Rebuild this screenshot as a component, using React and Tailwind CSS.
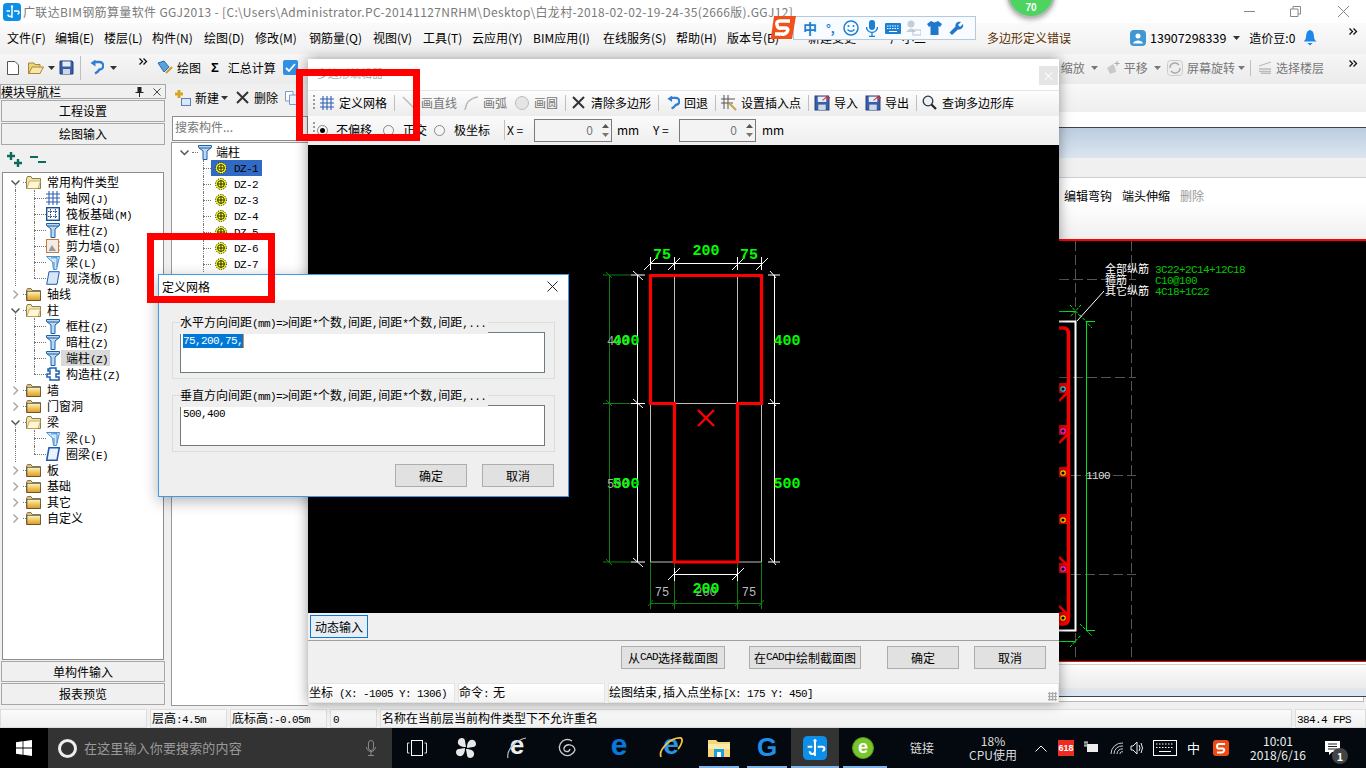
import React from 'react';

const Mixed = ({ t }) => t.split(/([\x00-\x7f]+)/).map((s, i) =>
  /^[\x00-\x7f]+$/.test(s)
    ? <span key={i} className="text-[11px] tracking-[-0.6px] [font-family:'Liberation_Mono',monospace]">{s}</span>
    : <span key={i}>{s}</span>);

const Logo = ({ s = 18 }) => (
  <svg width={s} height={s} viewBox="0 0 18 18" className="shrink-0">
    <rect width="18" height="18" rx="3.5" fill="#0d8ee8" />
    <path d="M9 3v8.500a2 2 0 0 1-4 0M3.500 8h3.500M11 8h3.500a1.500 1.500 0 0 1 0 3M9 13v2" stroke="#fff" strokeWidth="1.500" fill="none" />
    <circle cx="9" cy="3.500" r="1.200" fill="#fff" />
  </svg>
);
const Folder = ({ open }) => (
  <svg width="15" height="13" viewBox="0 0 15 13" className="shrink-0">
    <defs><linearGradient id="fg" x1="0" y1="0" x2="0" y2="1"><stop offset="0" stopColor="#fff3b8" /><stop offset="1" stopColor="#dd9a1c" /></linearGradient></defs>
    <path d="M.5 2.500V12.500H14.500V2.500H6L5 .5H1.500Z" fill={open ? '#f6e3a6' : '#d9c27a'} stroke="#6b6134" strokeWidth=".8" />
    {open
      ? <path d="M.8 12.500L3.500 5H14.600L12 12.500Z" fill="#fff6d2" stroke="#b5954a" strokeWidth=".7" />
      : <rect x="1" y="3.500" width="13.500" height="9" fill="url(#fg)" stroke="#222" strokeWidth=".5" />}
  </svg>
);
const Column = () => (
  <svg width="14" height="15" viewBox="0 0 14 15" className="shrink-0">
    <path d="M.5 .5H13.500V2.500L9 6V14.500H5V6L.5 2.500Z" fill="#bcd9f3" stroke="#1b5fa8" />
    <path d="M1 3H13" stroke="#1b5fa8" />
  </svg>
);
const GridI = ({ c = '#2f5fb3' }) => (
  <svg width="14" height="14" viewBox="0 0 14 14" className="shrink-0">
    <path d="M3 0V14M7 0V14M11 0V14M0 3H14M0 7H14M0 11H14" stroke={c} strokeWidth="1.100" />
  </svg>
);
const Raft = () => (
  <svg width="14" height="14" viewBox="0 0 14 14" className="shrink-0">
    <rect x=".7" y=".7" width="12.600" height="12.600" fill="#fff" stroke="#1d4f8f" strokeWidth="1.400" />
    <path d="M4.500 2V12M9.500 2V12M2 4.500H12M2 9.500H12" stroke="#1d4f8f" strokeDasharray="1.500 1" />
  </svg>
);
const Wall = () => (
  <svg width="14" height="14" viewBox="0 0 14 14" className="shrink-0">
    <rect x=".5" y=".5" width="12" height="13" fill="#f3ece4" stroke="#c97b3f" />
    <path d="M3 11L6 6L10 12H3Z" fill="#999" /><path d="M12 3H14M12 7H14M12 11H14" stroke="#c97b3f" />
  </svg>
);
const Beam = () => (
  <svg width="14" height="15" viewBox="0 0 14 15" className="shrink-0">
    <path d="M.5 1.500H13.500L10.500 14.500H7.500L6.500 7Z" fill="#cfe6f8" stroke="#4a90d0" />
    <path d="M5 3L11 2.500M8 7V14M11 3V12" stroke="#4a90d0" />
  </svg>
);
const Slab = ({ dark }) => (
  <svg width="14" height="14" viewBox="0 0 14 14" className="shrink-0">
    <path d="M3 .7H13.300L11 13.300H.7Z" fill={dark ? '#eaf3fb' : '#d5e7f7'} stroke="#2459b0" strokeWidth={dark ? 1.600 : 1} />
  </svg>
);
const Constr = () => (
  <svg width="14" height="14" viewBox="0 0 14 14" className="shrink-0">
    <path d="M4 1H10V4H13V7H10V10H13V13H4V10H1V7H4V4H2V2H4Z" fill="#fff" stroke="#1f5fb0" strokeWidth="1.500" />
  </svg>
);
const Gear = () => (
  <svg width="12" height="12" viewBox="0 0 12 12" className="shrink-0">
    <circle cx="6" cy="6" r="5.500" fill="#ffff20" />
    <circle cx="6" cy="6" r="5.400" fill="none" stroke="#111" strokeWidth="1" strokeDasharray="1.200 1.200" />
    <circle cx="6" cy="6" r="3.400" fill="#ffff20" stroke="#111" strokeWidth=".9" />
    <path d="M2.800 6H9.200M6 2.800V9.200" stroke="#111" strokeWidth=".9" />
  </svg>
);
const Chev = ({ open }) => (
  <svg width="9" height="9" viewBox="0 0 9 9" className="shrink-0">
    <path d={open ? 'M.5 2.500L4.500 6.500L8.500 2.500' : 'M2.500 .5L6.500 4.500L2.500 8.500'} fill="none" stroke={open ? '#555' : '#aaa'} strokeWidth="1.500" />
  </svg>
);
const Undo = ({ s = 15 }) => (
  <svg width={s} height={s} viewBox="0 0 15 15" className="shrink-0">
    <path d="M6 2H10.500A3.500 3.500 0 0 1 10.500 9.500C9.500 11 8 12.500 6 13.500" fill="none" stroke="#2f7fd6" strokeWidth="2.400" />
    <path d="M6.500 -.5V6.500L1.500 3Z" fill="#2f7fd6" />
  </svg>
);
const Arrow = ({ c = '#333' }) => (
  <svg width="7" height="4" viewBox="0 0 7 4" className="shrink-0"><path d="M0 0H7L3.500 4Z" fill={c} /></svg>
);
const Chevrons = () => (
  <svg width="9" height="7" viewBox="0 0 9 7" className="shrink-0 block"><path d="M.5 .5L3.500 3.500L.5 6.500M4.500 .5L7.500 3.500L4.500 6.500" fill="none" stroke="#111" strokeWidth="1.300" /></svg>
);
const BigX = () => (
  <svg width="13" height="13" viewBox="0 0 13 13" className="shrink-0"><path d="M1 1L12 12M12 1L1 12" stroke="#333" strokeWidth="2" /></svg>
);
const Save = ({ s = 15, arrow }) => (
  <svg width={s} height={s} viewBox="0 0 15 15" className="shrink-0">
    <path d="M1 1H13L14 2V14H1Z" fill="#3a5ea8" stroke="#223f7c" />
    <rect x="3.500" y="1.500" width="8" height="5" fill="#e8eef8" />
    <rect x="4" y="9" width="7" height="5" fill="#cfd6e4" />
    {arrow && <path d="M8 5L13 1V4L15 2" stroke="#c33" fill="none" />}
  </svg>
);
const Sep = ({ cn }) => <div className={`w-px h-4 bg-[#bfbfbf] shrink-0 ${cn}`} />;
const Grip = ({ cn }) => (
  <div className={`w-[2px] h-4 shrink-0 bg-[repeating-linear-gradient(to_bottom,#9a9a9a_0,#9a9a9a_2px,transparent_2px,transparent_4px)] ${cn}`} />
);

const tree = [
  ['open', '常用构件类型'], ['c', '轴网(J)', <GridI />], ['c', '筏板基础(M)', <Raft />], ['c', '框柱(Z)', <Column />], ['c', '剪力墙(Q)', <Wall />], ['c', '梁(L)', <Beam />], ['l', '现浇板(B)', <Slab />],
  ['closed', '轴线'],
  ['open', '柱'], ['c', '框柱(Z)', <Column />], ['c', '暗柱(Z)', <Column />], ['h', '端柱(Z)', <Column />], ['l', '构造柱(Z)', <Constr />],
  ['closed', '墙'], ['closed', '门窗洞'],
  ['open', '梁'], ['c', '梁(L)', <Beam />], ['l', '圈梁(E)', <Slab dark />],
  ['closed', '板'], ['closed', '基础'], ['closed', '其它'], ['closed', '自定义'],
];

const TreeRow = ({ row }) => {
  const [k, t, icon] = row;
  if (k === 'open' || k === 'closed') {
    return (
      <div className="relative flex items-center h-4 shrink-0">
        {k === 'open' && <div className="absolute left-[12px] top-[10px] h-[8px] border-l border-dotted border-[#777]" />}
        <div className="ml-[8px]"><Chev open={k === 'open'} /></div>
        <div className="w-[3px] ml-[3px] border-b border-dotted border-[#777]" />
        <Folder open={k === 'open'} />
        <div className="ml-[6px]"><Mixed t={t} /></div>
      </div>
    );
  }
  return (
    <div className="relative flex items-center h-4 shrink-0">
      <div className="absolute left-[12px] top-0 h-4 border-l border-dotted border-[#777]" />
      <div className={`absolute left-[31px] top-0 border-l border-dotted border-[#777] ${k === 'l' ? 'h-2' : 'h-4'}`} />
      <div className="ml-[31px] w-[12px] border-b border-dotted border-[#777]" />
      <div className="w-[14px] flex justify-center">{icon}</div>
      <div className={`ml-[1px] pl-[5px] pr-[2px] h-4 leading-4 ${k === 'h' ? 'bg-[#d9d9d9]' : ''}`}><Mixed t={t} /></div>
    </div>
  );
};

const NavBtn = ({ t, h = 'h-[22px]' }) => (
  <div className={`${h} mx-px mb-px shrink-0 flex items-center justify-center border border-[#a8a8a8] bg-[#f0f0f0] text-[12px]`}>{t}</div>
);

const Dz = ({ n, sel }) => (
  <div className="relative flex items-center h-4 shrink-0">
    <div className="absolute left-[31px] top-0 h-4 border-l border-dotted border-[#777]" />
    <div className="ml-[31px] w-[8px] border-b border-dotted border-[#777]" />
    <div className={`flex items-center w-[51px] h-4 pl-[4px] leading-4 ${sel ? 'bg-[#316ac5]' : ''}`}>
      <Gear />
      <div className="ml-[7px]"><Mixed t={`DZ-${n}`} /></div>
    </div>
  </div>
);

const menu = [
  ['w-[48px]', '文件(F)'], ['w-[49px]', '编辑(E)'], ['w-[48px]', '楼层(L)'], ['w-[52px]', '构件(N)'], ['w-[51px]', '绘图(D)'], ['w-[54px]', '修改(M)'], ['w-[64px]', '钢筋量(Q)'], ['w-[50px]', '视图(V)'], ['w-[49px]', '工具(T)'], ['w-[61px]', '云应用(Y)'], ['w-[70px]', 'BIM应用(I)'], ['w-[73px]', '在线服务(S)'], ['w-[51px]', '帮助(H)'], ['w-[81px]', '版本号(B)'], ['w-[82px]', '新建变更'], ['w-[97px]', '广小二'],
];

const Spin = ({ w }) => (
  <div className={`${w} h-[23px] border border-[#7a7a7a] bg-[#f3f3f3] flex items-center justify-end shrink-0`}>
    <span className="text-[#777] text-[12px] mr-[7px]">0</span>
    <div className="w-[10px] mr-[1px] flex flex-col gap-[5px] items-center">
      <svg width="7" height="4" viewBox="0 0 7 4"><path d="M0 4H7L3.500 0Z" fill="#555" /></svg>
      <svg width="7" height="4" viewBox="0 0 7 4"><path d="M0 0H7L3.500 4Z" fill="#777" /></svg>
    </div>
  </div>
);

const Radio = ({ on, cn }) => (
  <div className={`w-[11px] h-[11px] rounded-full border border-[#888] bg-[#f6f6f6] flex items-center justify-center shrink-0 ${cn}`}>
    {on && <div className="w-[5px] h-[5px] rounded-full bg-black" />}
  </div>
);

const WinBtn = ({ t, w, cn }) => (
  <div className={`${w} h-[23px] border border-[#adadad] bg-[#e1e1e1] flex items-center justify-center text-[12px] shrink-0 ${cn}`}><Mixed t={t} /></div>
);

const Tick = ({ x, y }) => <path d={`M${x - 6} ${y + 6}L${x + 6} ${y - 6}`} stroke="#fff" />;
const G = ({ x, y, children, c = '#00ff00', s = 15, a = 'middle', b = 700 }) => (
  <text x={x} y={y} fill={c} fontSize={s} fontWeight={b} textAnchor={a} fontFamily="'Liberation Mono',monospace">{children}</text>
);

const Polygon = () => (
  <svg width="751" height="468" viewBox="308 145 751 468" className="block shrink-0">
    <rect x="308" y="145" width="751" height="468" fill="#000" />
    <g stroke="#bdbdbd" fill="none">
      <path d="M650.500 275V562M674.500 275V562M737.500 275V562M761.500 275V562M650 275H762M650 403.500H762M650 562H762" />
    </g>
    <g stroke="#0f7d0f" fill="none">
      <path d="M609.500 275V562M603 275H631M603 403.500H631M603 562H631M650.500 562V609M674.500 562V609M737.500 562V609M761.500 562V609M650 603.500H762" />
      <path d="M606 272L612 278M606 400L612 406M606 559L612 565M648 606L653 600M672 606L677 600M735 606L740 600M759 606L764 600" />
    </g>
    <g stroke="#fff" fill="none">
      <path d="M637.500 275V562M631 275H645M631 403.500H645M631 562H645M774.500 275V562M768 275H780M768 403.500H780M768 562H780M650.500 263.500H761.500M650.500 257V270M674.500 257V270M737.500 257V270M761.500 257V270M674.500 574.500H737.500M674.500 568V581M737.500 568V581" />
      <path d="M633 271L643 280M633 399L643 408M633 558L643 567M770 271L776 278M770 399L776 406M770 558L776 565" />
    </g>
    <Tick x={650} y={264} /><Tick x={674} y={264} /><Tick x={738} y={264} /><Tick x={762} y={264} /><Tick x={674} y={574} /><Tick x={738} y={574} />
    <text x="607" y="345" fill="#aaa" fontSize="12" fontFamily="'Liberation Mono',monospace">400</text>
    <text x="607" y="488" fill="#aaa" fontSize="12" fontFamily="'Liberation Mono',monospace">500</text>
    <text x="706" y="596" fill="#aaa" fontSize="12" textAnchor="middle" fontFamily="'Liberation Mono',monospace">200</text>
    <text x="662" y="596" fill="#bbb" fontSize="12" textAnchor="middle" fontFamily="'Liberation Mono',monospace">75</text>
    <text x="749" y="596" fill="#bbb" fontSize="12" textAnchor="middle" fontFamily="'Liberation Mono',monospace">75</text>
    <path d="M650.500 275.500H761.500V403.500H737.500V562H674.500V403.500H650.500Z" fill="none" stroke="#ff0000" strokeWidth="3.200" />
    <path d="M698 410L714 426M714 410L698 426" stroke="#ff0000" strokeWidth="2.400" />
    <G x={662} y={259}>75</G><G x={706} y={255}>200</G><G x={749} y={259}>75</G>
    <G x={626} y={345}>400</G><G x={626} y={488}>500</G><G x={787} y={345}>400</G><G x={787} y={488}>500</G><G x={706} y={593}>200</G>
  </svg>
);

const rebars = [[389, '#22e0ff', 1], [431, '#ff30ff', 1], [473, '#ffe600', 0], [520, '#ffe600', 0], [569, '#ff30ff', 2], [618, '#ffe600', 2]];

const RightCad = () => (
  <svg width="307" height="420" viewBox="1059 241 307 420" className="block shrink-0">
    <rect x="1059" y="241" width="307" height="420" fill="#000" />
    <g stroke="#555" strokeDasharray="10 4" fill="none">
      <path d="M1075.500 241V660M1131.500 241V660M1059 279.500H1136M1059 377.500H1136M1071 475.500H1136M1071 574.500H1136" />
    </g>
    <path d="M1059 328H1063Q1068.500 328 1068.500 334V618Q1068.500 624 1063 624H1059" fill="none" stroke="#ff0000" strokeWidth="3.500" />
    <path d="M1059 321.500H1075.500V630.500H1059" fill="none" stroke="#fff" strokeWidth="2" />
    <path d="M1086.500 321V630M1059 311.500H1075M1086 321.500H1095M1059 641.500H1075M1086 630.500H1095" stroke="#00e020" fill="none" />
    <path d="M1070 305L1081 317M1081 305L1070 317M1080 315L1092 328M1080 624L1092 636M1070 647L1081 635" stroke="#00e020" strokeDasharray="3 1" />
    <path d="M1104 291L1077 321" stroke="#fff" />
    {rebars.map(([y, c, h]) => (
      <g key={y}>
        <rect x="1059" y={y - 6} width="8" height="10" fill="#e00000" />
        {h === 1 && <path d={`M1059 ${y + 12}L1067 ${y + 4}`} stroke="#f00" strokeWidth="2.500" />}
        {h === 2 && <path d={`M1059 ${y - 12}L1067 ${y - 4}`} stroke="#f00" strokeWidth="2.500" />}
        <circle cx="1063" cy={y} r="2.200" fill="#000" stroke={c} strokeWidth="1.200" />
      </g>
    ))}
    <g fill="#fff" fontSize="11" fontFamily="'Noto Sans CJK SC',sans-serif">
      <text x="1105" y="273">全部纵筋</text>
      <text x="1105" y="284">箍筋</text>
      <text x="1105" y="295">其它纵筋</text>
    </g>
    <g fill="#00c800" fontSize="11" letterSpacing="-0.6" fontFamily="'Liberation Mono',monospace">
      <text x="1155" y="273">3C22+2C14+12C18</text>
      <text x="1155" y="284">C10@100</text>
      <text x="1155" y="295">4C18+1C22</text>
    </g>
    <text x="1086" y="479" fill="#ddd" fontSize="11" letterSpacing="-0.6" fontFamily="'Liberation Mono',monospace">1100</text>
  </svg>
);

const TaskIcon = ({ w = 'w-[48px]', cn = '', children }) => (
  <div className={`${w} h-full flex items-center justify-center shrink-0 ${cn}`}>{children}</div>
);

export default function App() {
  return (
    <div className="relative w-[1366px] h-[768px] overflow-hidden bg-[#f0f0f0] flex flex-col text-black text-[12px] [font-family:'Noto_Sans_CJK_SC',sans-serif]">
      {/* title */}
      <div className="h-[23px] shrink-0 bg-white flex items-center relative">
        <div className="ml-[3px]"><Logo /></div>
        <div className="ml-[2px] text-[#7a7a7a] text-[12px] tracking-[0.35px] whitespace-nowrap">广联达BIM钢筋算量软件 GGJ2013 - [C:\Users\Administrator.PC-20141127NRHM\Desktop\白龙村-2018-02-02-19-24-35(2666版).GGJ12]</div>
        <div className="ml-auto flex items-center">
          <div className="w-[11px] h-px bg-[#888] mr-[35px]" />
          <svg width="11" height="11" viewBox="0 0 11 11" className="mr-[36px]"><path d="M.5 3H8V10.500H.5ZM3 3V.5H10.500V8H8" fill="none" stroke="#888" /></svg>
          <svg width="13" height="13" viewBox="0 0 13 13" className="mr-[16px]"><path d="M1 1L12 12M12 1L1 12" stroke="#888" /></svg>
        </div>
      </div>
      {/* menu */}
      <div className="h-[31px] shrink-0 flex items-center bg-[linear-gradient(#fafafa,#f0f0f0)] pl-[7px] pb-px">
        {menu.map(([w, t]) => <div key={t} className={`${w} shrink-0 whitespace-nowrap`}>{t}</div>)}
        <div className="w-[92px] text-[#5a3000] text-[12px] shrink-0 whitespace-nowrap">多边形定义错误</div>
        <div className="ml-[51px] flex items-center shrink-0">
          <div className="w-4 h-4 rounded-sm bg-[#3f97d4] flex items-center justify-center">
            <svg width="12" height="12" viewBox="0 0 12 12"><circle cx="6" cy="4" r="2.500" fill="#fff" /><path d="M1 11.500C2 7.500 10 7.500 11 11.500Z" fill="#fff" /></svg>
          </div>
          <span className="ml-[4px] text-[12.5px]">13907298339</span>
          <span className="ml-[7px]"><Arrow /></span>
          <span className="ml-[9px]">造价豆:0</span>
          <svg width="14" height="16" viewBox="0 0 14 16" className="ml-[8px]"><path d="M7 0C3.500 1 3.500 3 3 7C3 9 1.500 10.500 .5 11.500H13.500C12.500 10.500 11 9 11 7C10.500 3 10.500 1 7 0ZM4.500 13H9.500L7 15.500Z" fill="#1e86e8" /></svg>
        </div>
        <div className="ml-auto mr-[8px] self-start mt-[5px]"><Chevrons /></div>
      </div>
      {/* toolbar */}
      <div className="h-[30px] shrink-0 flex items-center bg-[linear-gradient(#f6f6f6,#ebebeb)] pb-[3px]">
        <svg width="12" height="14" viewBox="0 0 12 14" className="ml-[7px] shrink-0"><path d="M.5 .5H8L11.500 4V13.500H.5Z" fill="#fff" stroke="#555" /></svg>
        <svg width="16" height="13" viewBox="0 0 16 13" className="ml-[9px] shrink-0"><path d="M.5 2H6L7 3.500H12V12.500H.5Z" fill="#f0d27d" stroke="#a98936" /><path d="M.8 12.500L4 6H15.500L12 12.500Z" fill="#f7e6a9" stroke="#a98936" /></svg>
        <span className="ml-[4px]"><Arrow /></span>
        <span className="ml-[4px]"><Save /></span>
        <Sep cn="ml-[6px] !h-[24px]" />
        <span className="ml-[8px]"><Undo /></span>
        <span className="ml-[6px]"><Arrow /></span>
        <div className="ml-[22px] w-[9px] self-start mt-[4px]"><Chevrons /></div>
        <div className="ml-[9px] flex items-center shrink-0">
          <svg width="16" height="16" viewBox="0 0 16 16" className="shrink-0"><path d="M1 3L7 1L12 7L7 12Z" fill="#5aa0dc" stroke="#2a6aa8" /><path d="M9 13L15 7" stroke="#c99a2e" strokeWidth="2" /></svg>
          <span className="ml-[4px]">绘图</span>
          <span className="ml-[10px] font-bold text-[13px] [font-family:'Liberation_Sans',sans-serif]">Σ</span>
          <span className="ml-[9px]">汇总计算</span>
          <svg width="15" height="15" viewBox="0 0 15 15" className="ml-[7px] shrink-0"><rect width="15" height="15" rx="2" fill="#2f8fe0" /><path d="M3 8L6 11L12 4" stroke="#fff" strokeWidth="1.800" fill="none" /></svg>
        </div>
        <div className="ml-[763px] flex-1 flex items-center text-[#777]">
          <span>缩放</span>
          <span className="ml-[6px]"><Arrow c="#777" /></span>
          <svg width="14" height="14" viewBox="0 0 14 14" className="ml-[8px] shrink-0"><path d="M1 7L4 5L7 3L9 6L10 11L4 13Z" fill="#c9c9c9" /><path d="M11 0V5M8.500 2.500H13.500" stroke="#aaa" /></svg>
          <span className="ml-[4px]">平移</span>
          <span className="ml-[6px]"><Arrow c="#777" /></span>
          <svg width="16" height="16" viewBox="0 0 16 16" className="ml-[6px] shrink-0"><rect x=".5" y=".5" width="15" height="15" rx="3" fill="#eee" stroke="#ccc" /><path d="M3 8A5 5 0 0 1 12 5M13 8A5 5 0 0 1 4 11" stroke="#aaa" fill="none" strokeWidth="1.500" /></svg>
          <span className="ml-[4px]">屏幕旋转</span>
          <span className="ml-[3px]"><Arrow c="#777" /></span>
          <Sep cn="ml-[5px]" />
          <svg width="14" height="13" viewBox="0 0 14 13" className="ml-[7px] shrink-0"><path d="M1 5L13 1M1 8H13M1 10.500H13M3 12.500H13" stroke="#bbb" strokeWidth="1.300" /></svg>
          <span className="ml-[4px]">选择楼层</span>
          <div className="ml-auto mr-[8px] self-start mt-[1px]"><Chevrons /></div>
        </div>
      </div>
      {/* main */}
      <div className="h-[623px] shrink-0 flex">
        {/* nav */}
        <div className="w-[166px] shrink-0 flex flex-col">
          <div className="h-[15px] shrink-0 flex items-center border border-[#a8a8a8] pr-[4px] text-[12px] leading-none">
            <span>模块导航栏</span>
            <svg width="9" height="10" viewBox="0 0 9 10" className="ml-auto mr-[9px]"><path d="M2.500 0H6.500V5H8.500V6H5V10H4V6H.5V5H2.500Z" fill="#222" /></svg>
            <svg width="8" height="8" viewBox="0 0 8 8"><path d="M.5 .5L7.500 7.500M7.500 .5L.5 7.500" stroke="#444" /></svg>
          </div>
          <div className="h-px shrink-0" />
          <NavBtn t="工程设置" /><NavBtn t="绘图输入" />
          <div className="h-[26px] shrink-0 flex items-center pl-[7px]">
            <svg width="16" height="15" viewBox="0 0 16 15"><path d="M4 0V8M0 4H8M11 7V15M7 11H15" stroke="#0d6a5e" strokeWidth="2.400" /></svg>
            <svg width="16" height="10" viewBox="0 0 16 10" className="ml-[7px]"><path d="M0 3H8M8 8H16" stroke="#0d6a5e" strokeWidth="2.200" /></svg>
          </div>
          <div className="h-[488px] shrink-0 mx-[2px] pt-[1px] border border-[#8c8c8c] bg-white flex flex-col overflow-hidden">
            {tree.map((r, i) => <TreeRow key={i} row={r} />)}
          </div>
          <div className="h-px shrink-0" />
          <NavBtn t="单构件输入" h="h-[21px]" /><NavBtn t="报表预览" />
        </div>
        <div className="w-[5px] shrink-0" />
        {/* component panel */}
        <div className="w-[137px] shrink-0 flex flex-col">
          <div className="h-[32px] shrink-0 flex items-center pb-[5px]">
            <svg width="16" height="16" viewBox="0 0 16 16" className="ml-[4px] shrink-0"><path d="M4 0V8M0 4H8" stroke="#d8a520" strokeWidth="3" /><rect x="6.500" y="8.500" width="9" height="7" fill="#dbe7f5" stroke="#5a7fb5" /></svg>
            <span className="ml-[4px]">新建</span>
            <span className="ml-[2px]"><Arrow /></span>
            <span className="ml-[8px]"><BigX /></span>
            <span className="ml-[5px]">删除</span>
            <svg width="13" height="14" viewBox="0 0 13 14" className="ml-[7px] shrink-0"><path d="M.5 .5H8V10H.5Z" fill="#fff" stroke="#7a9cc8" /><path d="M4.500 4H12.500V13.500H4.500Z" fill="#eaf1fa" stroke="#7a9cc8" /></svg>
          </div>
          <div className="h-[25px] shrink-0 ml-px border border-[#8c8c8c] bg-white flex items-center pl-[2px] pb-[3px] text-[#777] text-[12px]">搜索构件...</div>
          <div className="h-px shrink-0" />
          <div className="h-[564px] shrink-0 border border-[#999] border-r-0 bg-white pt-[1px] flex flex-col">
            <div className="relative flex items-center h-4 shrink-0">
              <div className="ml-[8px]"><Chev open /></div>
              <div className="w-[6px] ml-[3px] border-b border-dotted border-[#777]" />
              <Column />
              <span className="ml-[4px]">端柱</span>
            </div>
            {[1, 2, 3, 4, 5, 6, 7].map(n => <Dz key={n} n={n} sel={n === 1} />)}
          </div>
        </div>
        {/* right */}
        <div className="flex-1 flex flex-col min-w-0">
          <div className="h-[28px] shrink-0 bg-[linear-gradient(#f8f8f8,#efefef)]" />
          <div className="h-[15px] shrink-0 bg-white" />
          <div className="h-px shrink-0 bg-[#444]" />
          <div className="h-[30px] shrink-0 bg-[linear-gradient(#bccde0,#dbe5f0)]" />
          <div className="h-[20px] shrink-0 bg-[#f0f0f0] border-b border-[#cfcfcf]" />
          <div className="h-px shrink-0 bg-white" />
          <div className="h-[60px] shrink-0 bg-[linear-gradient(#fff,#fff_40%,#f0f0f0)] flex justify-end">
            <div className="w-[307px] flex items-start pt-[8px] pl-[5px]">
              <span>编辑弯钩</span><span className="ml-[10px]">端头伸缩</span><span className="ml-[10px] text-[#999]">删除</span>
            </div>
          </div>
          <div className="h-[2px] shrink-0 bg-[#ff0000]" />
          <div className="h-[420px] shrink-0 bg-black flex justify-end"><RightCad /></div>
          <div className="h-px shrink-0 bg-[#ff0000]" />
          <div className="h-[2px] shrink-0 bg-white" />
          <div className="h-[24px] shrink-0 border-t border-[#cfcfcf] bg-[linear-gradient(#fbfbfb,#ececec)]" />
          <div className="h-[2px] shrink-0 bg-[#e6e6e6]" />
          <div className="h-[7px] shrink-0 bg-[#dbe5f0] border-b border-[#444]" />
          <div className="h-[5px] shrink-0 bg-white border-b border-r border-[#bbb] mr-[2px]" />
          <div className="h-[4px] shrink-0" />
        </div>
      </div>
      {/* status */}
      <div className="h-[21px] shrink-0 flex items-center gap-[3px] bg-[#f0f0f0] pt-px text-[12px]">
        <div className="w-[147px] h-[19px] border border-[#ddd] bg-[linear-gradient(#fbfbfb,#efefef)] shrink-0" />
        <div className="w-[77px] h-[19px] pl-[1px] border border-[#ddd] bg-[linear-gradient(#fbfbfb,#efefef)] leading-[15px] shrink-0"><Mixed t="层高:4.5m" /></div>
        <div className="w-[97px] h-[19px] pl-[1px] border border-[#ddd] bg-[linear-gradient(#fbfbfb,#efefef)] leading-[15px] shrink-0 whitespace-nowrap"><Mixed t="底标高:-0.05m" /></div>
        <div className="w-[47px] h-[19px] pl-[2px] border border-[#ddd] bg-[linear-gradient(#fbfbfb,#efefef)] leading-[15px] shrink-0"><Mixed t="0" /></div>
        <div className="w-[912px] h-[19px] pl-[1px] border border-[#ddd] bg-[linear-gradient(#fbfbfb,#efefef)] leading-[15px] shrink-0">名称在当前层当前构件类型下不允许重名</div>
        <div className="w-[71px] h-[19px] pl-[1px] border border-[#ddd] bg-[linear-gradient(#fbfbfb,#efefef)] leading-[15px] shrink-0"><Mixed t="384.4 FPS" /></div>
      </div>
      {/* taskbar */}
      <div className="h-[40px] shrink-0 bg-[#03090f] flex items-center text-white">
        <div className="w-[48px] h-full bg-black flex items-center justify-center shrink-0">
          <svg width="16" height="16" viewBox="0 0 16 16"><path d="M0 2.300L6.600 1.300V7.600H0ZM7.400 1.200L16 0V7.600H7.400ZM0 8.400H6.600V14.700L0 13.700ZM7.400 8.400H16V16L7.400 14.800Z" fill="#fff" /></svg>
        </div>
        <div className="w-[344px] h-full bg-[#333] flex items-center shrink-0">
          <div className="ml-[10px] w-[19px] h-[19px] rounded-full border-[3px] border-[#eee] shrink-0" />
          <span className="ml-[7px] text-[#9a9a9a] text-[13px] tracking-[0.15px]">在这里输入你要搜索的内容</span>
          <svg width="10" height="16" viewBox="0 0 10 16" className="ml-auto mr-[16px]"><rect x="2.500" y=".5" width="5" height="10" rx="2.500" fill="none" stroke="#888" /><path d="M.5 7A4.500 4.500 0 0 0 9.500 7M5 11.500V15M2 15.500H8" stroke="#888" fill="none" /></svg>
        </div>
        <TaskIcon w="w-[49px]">
          <svg width="20" height="16" viewBox="0 0 20 16"><rect x="4.500" y=".5" width="11" height="15" fill="none" stroke="#fff" /><path d="M2.500 3H.5V13H2.500M17.500 3H19.500V13H17.500" fill="none" stroke="#ddd" /></svg>
        </TaskIcon>
        <TaskIcon w="w-[50px]">
          <svg width="22" height="22" viewBox="0 0 22 22"><g fill="#e8e8e8"><path d="M11 10C6 10 2 8 3 4C4 0 10 0 10 4Z" /><path d="M12 11C12 6 14 2 18 3C22 4 22 10 18 10Z" /><path d="M11 12C16 12 20 14 19 18C18 22 12 22 12 18Z" /><path d="M10 11C10 16 8 20 4 19C0 18 0 12 4 12Z" /></g></svg>
        </TaskIcon>
        <TaskIcon w="w-[52px]">
          <div className="relative w-[22px] h-[24px] flex items-center justify-center">
            <span className="text-[26px] leading-none font-bold text-[#eee] mt-[-6px] [font-family:'Liberation_Sans',sans-serif]">e</span>
            <svg width="22" height="24" viewBox="0 0 22 24" className="absolute left-0 top-0"><path d="M2 22C0 14 10 4 20 2" fill="none" stroke="#bbb" strokeWidth="1.200" /></svg>
          </div>
        </TaskIcon>
        <TaskIcon>
          <svg width="20" height="20" viewBox="0 0 20 20"><path d="M15 3A8 8 0 1 0 18 12C17 6 9 5 7 10C6 14 12 15 13 11" fill="none" stroke="#ccc" strokeWidth="1.300" /></svg>
        </TaskIcon>
        <TaskIcon w="w-[56px]">
          <span className="text-[30px] leading-none font-bold text-[#0a78d7] [font-family:'Liberation_Sans',sans-serif] mt-[-6px]">e</span>
        </TaskIcon>
        <TaskIcon>
          <div className="relative w-[26px] h-[26px] flex items-center justify-center">
            <span className="text-[28px] leading-none font-bold text-[#2a93e8] mt-[-6px] [font-family:'Liberation_Sans',sans-serif]">e</span>
            <svg width="26" height="26" viewBox="0 0 26 26" className="absolute left-0 top-0"><path d="M3 22C0 14 14 2 23 3C26 5 22 12 20 14" fill="none" stroke="#f2c53c" strokeWidth="1.800" /></svg>
          </div>
        </TaskIcon>
        <TaskIcon cn="relative">
          <svg width="22" height="20" viewBox="0 0 22 20"><path d="M0 2H8L10 4H22V19H0Z" fill="#f5d77a" /><rect x="0" y="6" width="22" height="5" fill="#fbe9a9" /><rect x="6" y="11" width="10" height="8" fill="#1ea0e0" /><rect x="9" y="14" width="4" height="5" fill="#fff" /></svg>
          <div className="absolute bottom-0 left-[4px] right-[4px] h-[2px] bg-[#7fb5e6]" />
        </TaskIcon>
        <TaskIcon cn="relative">
          <span className="text-[26px] leading-none font-bold text-[#1d8fe8] [font-family:'Liberation_Sans',sans-serif] mt-[-2px]">G</span>
          <div className="absolute bottom-0 left-[4px] right-[4px] h-[2px] bg-[#7fb5e6]" />
        </TaskIcon>
        <TaskIcon cn="relative bg-[#333]">
          <Logo s={24} />
          <div className="absolute bottom-0 left-0 right-0 h-[2px] bg-[#7fb5e6]" />
        </TaskIcon>
        <TaskIcon cn="relative">
          <div className="w-[22px] h-[22px] rounded-full bg-[#7ac52e] border border-[#4f9a16] flex items-center justify-center">
            <span className="text-[18px] leading-none font-bold text-white mt-[-3px] [font-family:'Liberation_Sans',sans-serif]">e</span>
          </div>
          <div className="absolute bottom-0 left-[4px] right-0 h-[2px] bg-[#7fb5e6]" />
        </TaskIcon>
        <div className="ml-[23px] w-[28px] text-[12px] text-[#ddd] shrink-0">链接</div>
        <div className="ml-[28px] w-[54px] flex flex-col items-center text-[12px] leading-[14px] text-[#ddd] shrink-0">
          <span>18%</span><span>CPU使用</span>
        </div>
        <svg width="12" height="7" viewBox="0 0 12 7" className="ml-[15px] shrink-0"><path d="M.5 6.500L6 1L11.500 6.500" stroke="#fff" fill="none" /></svg>
        <div className="ml-[11px] w-[16px] h-[16px] bg-[#ee2b22] text-[9px] leading-4 text-center font-bold shrink-0 [font-family:'Liberation_Sans',sans-serif]">618</div>
        <svg width="16" height="14" viewBox="0 0 16 14" className="ml-[9px] shrink-0"><rect x="4" y="3" width="11" height="8" fill="#eee" /><path d="M1 1H5M2 1V5M4 1V5M1 5H5" stroke="#ddd" /></svg>
        <svg width="16" height="14" viewBox="0 0 16 14" className="ml-[10px] shrink-0"><path d="M2 13A11 11 0 0 1 14 2M5 13A8 8 0 0 1 14 5M8 13A5 5 0 0 1 14 8M11 13A2 2 0 0 1 14 11" stroke="#ccc" fill="none" /></svg>
        <svg width="15" height="14" viewBox="0 0 15 14" className="ml-[5px] shrink-0"><path d="M1 5H3L7 1V13L3 9H1ZM9 4Q11 7 9 10M11 2Q14 7 11 12" stroke="#eee" fill="none" /></svg>
        <svg width="24" height="16" viewBox="0 0 24 16" className="ml-[8px] shrink-0"><rect x=".5" y=".5" width="23" height="15" fill="none" stroke="#fff" /><path d="M3 4H21M3 7.500H21" stroke="#fff" strokeDasharray="1.500 1.500" /><path d="M6 11.500H18" stroke="#fff" /></svg>
        <span className="ml-[10px] text-[13px] shrink-0">中</span>
        <svg width="16" height="16" viewBox="0 0 16 16" className="ml-[13px] shrink-0"><rect width="16" height="16" rx="3" fill="#f04a14" /><path d="M12 4H6Q4 4 4 6.500T6.500 8.500H9.500Q12 9 11 11T8 12.500H4" stroke="#fff" strokeWidth="2" fill="none" /></svg>
        <div className="ml-[16px] w-[66px] flex flex-col items-center text-[12px] leading-[14px] text-[#eee] shrink-0">
          <span>10:01</span><span>2018/6/16</span>
        </div>
        <div className="relative ml-[14px] shrink-0">
          <svg width="15" height="14" viewBox="0 0 15 14"><path d="M0 0H15V11H7L4 14V11H0Z" fill="#fff" /><path d="M3 3H12M3 5.500H12M3 8H12" stroke="#222" /></svg>
          <div className="absolute left-[7px] top-[7px] w-[16px] h-[16px] rounded-full bg-[#444] text-[11px] leading-4 text-center font-bold">1</div>
        </div>
      </div>

      {/* floating polygon editor */}
      <div className="absolute left-[308px] top-[59px] w-[751px] h-[644px] bg-[#f0f0f0] shadow-[0_0_12px_rgba(0,0,0,0.4)] flex flex-col">
        <div className="h-[31px] shrink-0 bg-white flex items-start">
          <span className="ml-[9px] mt-[6px] text-[#aaa] text-[11px]">多边形编辑器</span>
          <div className="ml-auto mr-px mt-[7px] w-[19px] h-[19px] bg-[#e5e5e5] flex items-center justify-center text-white text-[12px]">×</div>
        </div>
        <div className="h-[26px] shrink-0 flex items-center bg-[linear-gradient(#fdfdfd,#ececec)] border-t border-[#e6e6e6] whitespace-nowrap pb-[2px]">
          <Grip cn="ml-[5px]" />
          <span className="ml-[5px]"><GridI /></span>
          <span className="ml-[5px] w-[48px] shrink-0">定义网格</span>
          <Sep cn="ml-[7px]" />
          <svg width="14" height="14" viewBox="0 0 14 14" className="ml-[7px] shrink-0"><path d="M1 1L13 13" stroke="#bbb" strokeWidth="1.500" /></svg>
          <span className="ml-[5px] w-[36px] shrink-0 text-[#777]">画直线</span>
          <svg width="14" height="14" viewBox="0 0 14 14" className="ml-[7px] shrink-0"><path d="M1 14C2 6 6 2 14 1" stroke="#bbb" strokeWidth="1.500" fill="none" /></svg>
          <span className="ml-[5px] w-[24px] shrink-0 text-[#777]">画弧</span>
          <div className="ml-[8px] w-[14px] h-[14px] rounded-full border border-[#bbb] bg-[#e5e5e5] shrink-0" />
          <span className="ml-[5px] w-[24px] shrink-0 text-[#777]">画圆</span>
          <Sep cn="ml-[7px]" />
          <span className="ml-[6px] w-[14px] shrink-0"><BigX /></span>
          <span className="ml-[5px] w-[60px] shrink-0">清除多边形</span>
          <Sep cn="ml-[7px]" />
          <span className="ml-[7px] w-[14px] shrink-0"><Undo s={14} /></span>
          <span className="ml-[4px] w-[24px] shrink-0">回退</span>
          <Sep cn="ml-[7px]" />
          <svg width="16" height="16" viewBox="0 0 16 16" className="ml-[5px] shrink-0"><path d="M3 0V14M7 0V14M0 4H14M0 8H12" stroke="#555" /><path d="M8 8L15 15" stroke="#c9a050" strokeWidth="2" /></svg>
          <span className="ml-[4px] w-[60px] shrink-0">设置插入点</span>
          <Sep cn="ml-[7px]" />
          <span className="ml-[5px] w-[16px] shrink-0"><Save s={16} arrow /></span>
          <span className="ml-[4px] w-[24px] shrink-0">导入</span>
          <span className="ml-[7px] w-[16px] shrink-0"><Save s={16} arrow /></span>
          <span className="ml-[4px] w-[24px] shrink-0">导出</span>
          <Sep cn="ml-[7px]" />
          <svg width="15" height="15" viewBox="0 0 15 15" className="ml-[5px] shrink-0"><circle cx="6" cy="6" r="4.800" fill="#e8f2fb" stroke="#333" strokeWidth="1.300" /><path d="M9.500 9.500L14 14" stroke="#222" strokeWidth="2.200" /></svg>
          <span className="ml-[5px] shrink-0">查询多边形库</span>
        </div>
        <div className="h-[29px] shrink-0 flex items-center bg-[linear-gradient(#fbfbfb,#ededed)] whitespace-nowrap pb-px">
          <Grip cn="ml-[5px]" />
          <Radio on cn="ml-[2px]" />
          <span className="ml-[8px] w-[36px] shrink-0">不偏移</span>
          <Radio cn="ml-[11px]" />
          <span className="ml-[9px] w-[24px] shrink-0">正交</span>
          <Radio cn="ml-[7px]" />
          <span className="ml-[9px] w-[36px] shrink-0">极坐标</span>
          <Sep cn="ml-[14px] !h-[20px]" />
          <span className="ml-[2px] w-[20px] shrink-0">X =</span>
          <Spin w="ml-[7px] w-[78px]" />
          <span className="ml-[5px] w-[21px] shrink-0">mm</span>
          <span className="ml-[15px] w-[19px] shrink-0">Y =</span>
          <Spin w="ml-[7px] w-[77px]" />
          <span className="ml-[6px] shrink-0">mm</span>
        </div>
        <Polygon />
        <div className="h-[28px] shrink-0 border-b border-[#a0a0a0] flex items-start pt-[2px] pl-[2px]">
          <div className="w-[58px] h-[23px] border border-[#0a78d7] bg-[#e8eef3] flex items-center justify-center">动态输入</div>
        </div>
        <div className="h-[42px] shrink-0 flex items-center pb-[9px] pl-[313px]">
          <WinBtn t="从CAD选择截面图" w="w-[104px]" />
          <WinBtn t="在CAD中绘制截面图" w="w-[112px]" cn="ml-[24px]" />
          <WinBtn t="确定" w="w-[72px]" cn="ml-[26px]" />
          <WinBtn t="取消" w="w-[72px]" cn="ml-[15px]" />
        </div>
        <div className="h-[20px] shrink-0 flex gap-[3px] text-[12px]">
          <div className="w-[147px] border border-[#e4e4e4] bg-[linear-gradient(#fff,#f4f4f4)] leading-[16px] whitespace-nowrap overflow-hidden shrink-0"><Mixed t="坐标 (X: -1005 Y: 1306)" /></div>
          <div className="w-[147px] border border-[#e4e4e4] bg-[linear-gradient(#fff,#f4f4f4)] leading-[16px] shrink-0"><Mixed t="命令:" /><span className="ml-[4px]">无</span></div>
          <div className="relative flex-1 border border-[#e4e4e4] bg-[linear-gradient(#fff,#f4f4f4)] leading-[16px] whitespace-nowrap"><Mixed t="绘图结束,插入点坐标[X: 175 Y: 450]" />
            <div className="absolute right-[1px] bottom-[1px] w-[9px] h-[9px] bg-[radial-gradient(#aaa_1px,transparent_1.500px)] bg-[length:3px_3px]" />
          </div>
        </div>
      </div>

      {/* dialog */}
      <div className="absolute left-[158px] top-[274px] w-[411px] h-[223px] border border-[#3c9bea] bg-[#efefef] shadow-[0_4px_14px_rgba(0,0,0,0.3)] flex flex-col">
        <div className="h-[25px] shrink-0 bg-white flex items-center pl-[3px] pb-[2px]">
          <span>定义网格</span>
          <svg width="11" height="11" viewBox="0 0 11 11" className="ml-auto mr-[10px]"><path d="M.5 .5L10.500 10.500M10.500 .5L.5 10.500" stroke="#222" /></svg>
        </div>
        <div className="relative mt-[22px] mx-[13px] h-[57px] shrink-0 border border-[#dcdcdc] pl-[7px] pr-[9px] pt-[9px]">
          <div className="absolute left-[7px] top-[-11px] bg-[#efefef] pr-[2px] leading-[20px] whitespace-nowrap"><Mixed t="水平方向间距(mm)=>间距*个数,间距,间距*个数,间距,..." /></div>
          <div className="h-[41px] border border-[#6d7b85] bg-white pl-[2px] pt-[1px] flex items-start">
            <span className="bg-[#0078d7] text-white h-[14px] leading-[14px] text-[11px] tracking-[-0.6px] [font-family:'Liberation_Mono',monospace]">75,200,75,</span>
            <span className="w-px h-[14px] bg-[#e8892f]" />
          </div>
        </div>
        <div className="relative mt-[16px] mx-[13px] h-[57px] shrink-0 border border-[#dcdcdc] pl-[7px] pr-[9px] pt-[9px]">
          <div className="absolute left-[7px] top-[-11px] bg-[#efefef] pr-[2px] leading-[20px] whitespace-nowrap"><Mixed t="垂直方向间距(mm)=>间距*个数,间距,间距*个数,间距,..." /></div>
          <div className="h-[41px] border border-[#777] bg-white pl-[2px] pt-[1px] leading-[14px] text-[11px] tracking-[-0.6px] [font-family:'Liberation_Mono',monospace]">500,400</div>
        </div>
        <div className="flex justify-end gap-[15px] mr-[14px] mt-[12px]">
          <WinBtn t="确定" w="w-[72px]" />
          <WinBtn t="取消" w="w-[72px]" />
        </div>
      </div>

      {/* annotations */}
      <div className="absolute left-[296px] top-[69px] w-[124px] h-[72px] border-[7px] border-[#ff0000]" />
      <div className="absolute left-[147px] top-[233px] w-[128px] h-[70px] border-[7px] border-[#ff0000]" />

      {/* input method bar */}
      <div className="absolute left-[793px] top-[16px] w-[183px] h-[24px] border border-[#b7c9dd] bg-[#f8fbff] flex items-center">
        <span className="ml-[9px] text-[#1b7fd4] font-bold text-[14px] leading-none">中</span>
        <span className="ml-[9px] text-[#1b7fd4] font-bold text-[12px] leading-none">°,</span>
        <svg width="16" height="16" viewBox="0 0 16 16" className="ml-[8px]"><circle cx="8" cy="8" r="7" fill="none" stroke="#1b7fd4" strokeWidth="1.500" /><circle cx="5.500" cy="6" r="1" fill="#1b7fd4" /><circle cx="10.500" cy="6" r="1" fill="#1b7fd4" /><path d="M4.500 9.500Q8 13 11.500 9.500" stroke="#1b7fd4" fill="none" strokeWidth="1.300" /></svg>
        <svg width="12" height="17" viewBox="0 0 12 17" className="ml-[7px]"><rect x="3" y="0" width="6" height="10" rx="3" fill="#1b7fd4" /><path d="M.5 7A5.500 5.500 0 0 0 11.500 7M6 13V16M3 16.500H9" stroke="#1b7fd4" fill="none" strokeWidth="1.300" /></svg>
        <svg width="16" height="11" viewBox="0 0 16 11" className="ml-[7px]"><rect width="16" height="11" rx="1" fill="#1b7fd4" /><path d="M2 3H14M2 5.500H14" stroke="#fff" strokeDasharray="1.500 1" /><path d="M4 8.500H12" stroke="#fff" /></svg>
        <svg width="15" height="16" viewBox="0 0 15 16" className="ml-[5px]"><circle cx="5" cy="4" r="3.500" fill="#c3ced9" /><path d="M0 12Q5 5 10 12Z" fill="#c3ced9" /><rect x="7" y="10" width="8" height="5" fill="none" stroke="#b5c2cf" /></svg>
        <svg width="15" height="14" viewBox="0 0 15 14" className="ml-[6px]"><path d="M4 0L7.500 1.500L11 0L15 3L13 6L11.500 5V14H3.500V5L2 6L0 3Z" fill="#1f78cc" /></svg>
        <svg width="15" height="15" viewBox="0 0 15 15" className="ml-[7px]"><path d="M14 3L11 6L9 4L12 1C9 0 6 2 6.500 5.500L.5 11.500L3 14L9 8.500C12.500 9 15 6 14 3Z" fill="#1f78cc" /></svg>
      </div>
      <svg width="28" height="25" viewBox="0 0 28 25" className="absolute left-[769px] top-[15px]">
        <path d="M5 1H27L23 24H1L2 22Z" fill="#f0501a" />
        <path d="M21 6H11Q7 6 8 10T12 13H17Q20 14 18 17T13 19H6" stroke="#fff" strokeWidth="3.500" fill="none" />
      </svg>

      {/* score badge */}
      <div className="absolute left-[1007px] top-[-30px] w-[48px] h-[48px] rounded-full bg-[#4dd35f] border-[2px] border-[#b9b9b9] shadow-[0_2px_5px_rgba(0,0,0,0.3)] flex items-end justify-center pb-[3px]">
        <span className="text-white text-[10px] font-bold leading-none [font-family:'Liberation_Sans',sans-serif]">70</span>
      </div>
    </div>
  );
}
